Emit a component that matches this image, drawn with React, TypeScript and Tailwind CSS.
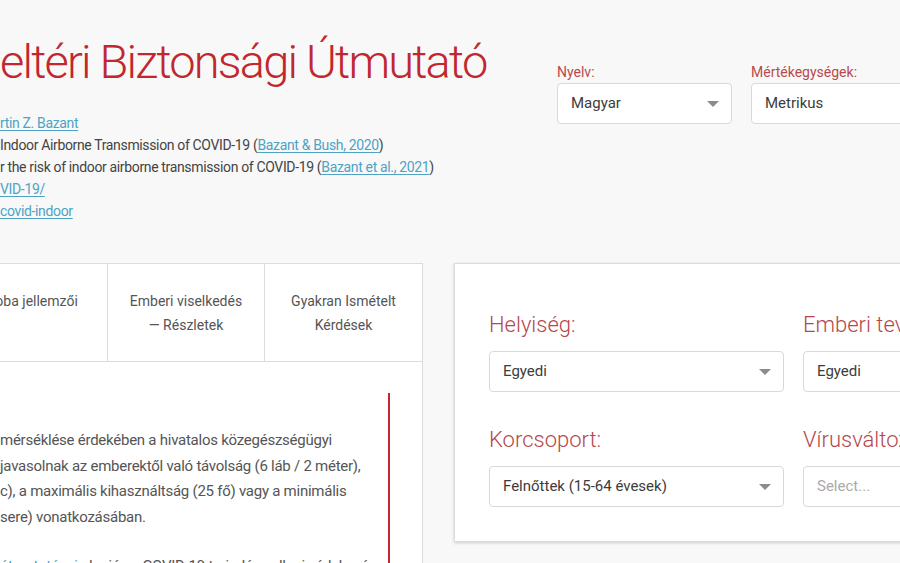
import type { ReactNode } from 'react';

// visible text starts exactly at the left edge of the window; the part before it is clipped
const Cut = ({ hidden, children, className = '', w = 'w-[300px]' }: { hidden: ReactNode; children: ReactNode; className?: string; w?: string }) => (
  <div className={'flex whitespace-nowrap ' + className}>
    <div className={'flex shrink-0 justify-end overflow-hidden ' + w}>
      <span>{hidden}</span>
    </div>
    <span>{children}</span>
  </div>
);

const Link = ({ children }: { children: ReactNode }) => (
  <a className="text-[#4ea3c4] underline underline-offset-2 decoration-[#4ea3c4]">{children}</a>
);

const Select = ({ value, placeholder, arrow = true, className = '' }: { value?: string; placeholder?: string; arrow?: boolean; className?: string }) => (
  <div className={'flex items-center justify-between h-[41px] bg-white border border-[#d9d9d9] rounded-[4px] pl-[13px] pr-[12px] ' + className}>
    {value ? (
      <span className="text-[15px] text-[#3c3c3c]">{value}</span>
    ) : (
      <span className="text-[15px] text-[#aaa]">{placeholder}</span>
    )}
    {arrow && <span className="w-0 h-0 border-x-[6px] border-x-transparent border-t-[6px] border-t-[#8c8c8c]" />}
  </div>
);

const Field = ({ label, children, className = '' }: { label: string; children: ReactNode; className?: string }) => (
  <div className={className}>
    <div className="text-[22px] leading-[30px] font-light text-[#b5474b] whitespace-nowrap">{label}</div>
    <div className="mt-[11px]">{children}</div>
  </div>
);

export default function App() {
  return (
    <div className="w-[900px] h-[563px] overflow-hidden bg-[#f8f8f8] font-['Roboto',sans-serif] text-[#444]">
      <div className="w-[1600px] ml-[-300px]">
        <header className="flex items-start">
          <div className="w-[857px] pt-[33px]">
            <Cut hidden="COVID-19 B" className="text-[47px] leading-[58px] font-light tracking-[-1.8px] text-[#c1272d]">
              eltéri Biztonsági Útmutató
            </Cut>
            <div className="mt-[21px] text-[14px] leading-[22px] tracking-[-0.35px]">
              <Cut hidden={<>Készítette: <Link>Kasim Khan</Link> és <Link>Ma</Link></>}>
                <Link>rtin Z. Bazant</Link>
              </Cut>
              <Cut hidden="Cikk: A guideline to limit ">
                Indoor Airborne Transmission of COVID-19 (<Link>Bazant &amp; Bush, 2020</Link>)
              </Cut>
              <Cut hidden="Kapcsolódó: Monitoring carbon dioxide to quantify fo">
                r the risk of indoor airborne transmission of COVID-19 (<Link>Bazant et al., 2021</Link>)
              </Cut>
              <Cut hidden={<>Weboldal: <Link>http://web.mit.edu/bazant/www/CO</Link></>}>
                <Link>VID-19/</Link>
              </Cut>
              <Cut hidden={<>Kód: <Link>https://github.com/mzbazant/</Link></>}>
                <Link>covid-indoor</Link>
              </Cut>
            </div>
          </div>
          <div className="flex gap-[19px] pt-[63px]">
            <div>
              <div className="text-[14px] leading-[18px] text-[#b94a4e]">Nyelv:</div>
              <Select value="Magyar" className="mt-[2px] w-[175px]" />
            </div>
            <div>
              <div className="text-[14px] leading-[18px] text-[#b94a4e]">Mértékegységek:</div>
              <Select value="Metrikus" className="mt-[2px] w-[175px]" />
            </div>
          </div>
        </header>

        <main className="flex items-start mt-[41px]">
          <section className="ml-[92px] w-[631px] h-[400px] bg-white border border-[#dcdcdc]">
            <nav className="flex border-b border-[#dcdcdc] text-[14px] leading-[24px] text-[#555] text-center whitespace-nowrap">
              <div className="w-[158px] pt-[25px] pb-[24px] border-r border-[#dcdcdc]">Bevezetés</div>
              <div className="w-[157px] pt-[25px] pb-[24px] border-r border-[#dcdcdc]">Szoba jellemzői</div>
              <div className="w-[157px] pt-[25px] pb-[24px] border-r border-[#dcdcdc]">
                Emberi viselkedés
                <br />— Részletek
              </div>
              <div className="flex-1 pt-[25px] pb-[24px]">
                Gyakran Ismételt
                <br />
                Kérdések
              </div>
            </nav>
            <div className="pt-[31px]">
              <div className="w-[597px] h-[300px] border-r-2 border-[#c1272d]">
                <div className="pt-[35px] text-[15px] leading-[25.5px] tracking-[-0.25px] text-[#555]">
                  <Cut w="w-[207px]" hidden="A COVID-19 terjedésének ">mérséklése érdekében a hivatalos közegészségügyi</Cut>
                  <Cut w="w-[207px]" hidden="irányelvek korlátozásokat ">javasolnak az emberektől való távolság (6 láb / 2 méter),</Cut>
                  <Cut w="w-[207px]" hidden="a tartózkodási idő (15 per">c), a maximális kihasználtság (25 fő) vagy a minimális</Cut>
                  <Cut w="w-[207px]" hidden="szellőzés (óránként 6 légcse">sere) vonatkozásában.</Cut>
                  <Cut w="w-[207px]" hidden="Ez az alkalmazás " className="mt-[24px]">
                    <Link>útmutatásai</Link> alapján a COVID-19 terjedése elleni védekezés
                  </Cut>
                </div>
              </div>
            </div>
          </section>

          <section className="ml-[31px] w-[720px] bg-white border border-[#dcdcdc] shadow-[0_1px_3px_rgba(0,0,0,0.18)] px-[34px] pt-[46px] pb-[34px]">
            <div className="grid grid-cols-[295px_295px_295px] gap-x-[19px]">
              <Field label="Helyiség:">
                <Select value="Egyedi" />
              </Field>
              <Field label="Emberi tevékenység:">
                <Select value="Egyedi" />
              </Field>
              <div />
              <Field label="Korcsoport:" className="mt-[33px]">
                <Select value="Felnőttek (15-64 évesek)" />
              </Field>
              <Field label="Vírusváltozat:" className="mt-[33px]">
                <Select placeholder="Select..." />
              </Field>
            </div>
          </section>
        </main>
      </div>
    </div>
  );
}
